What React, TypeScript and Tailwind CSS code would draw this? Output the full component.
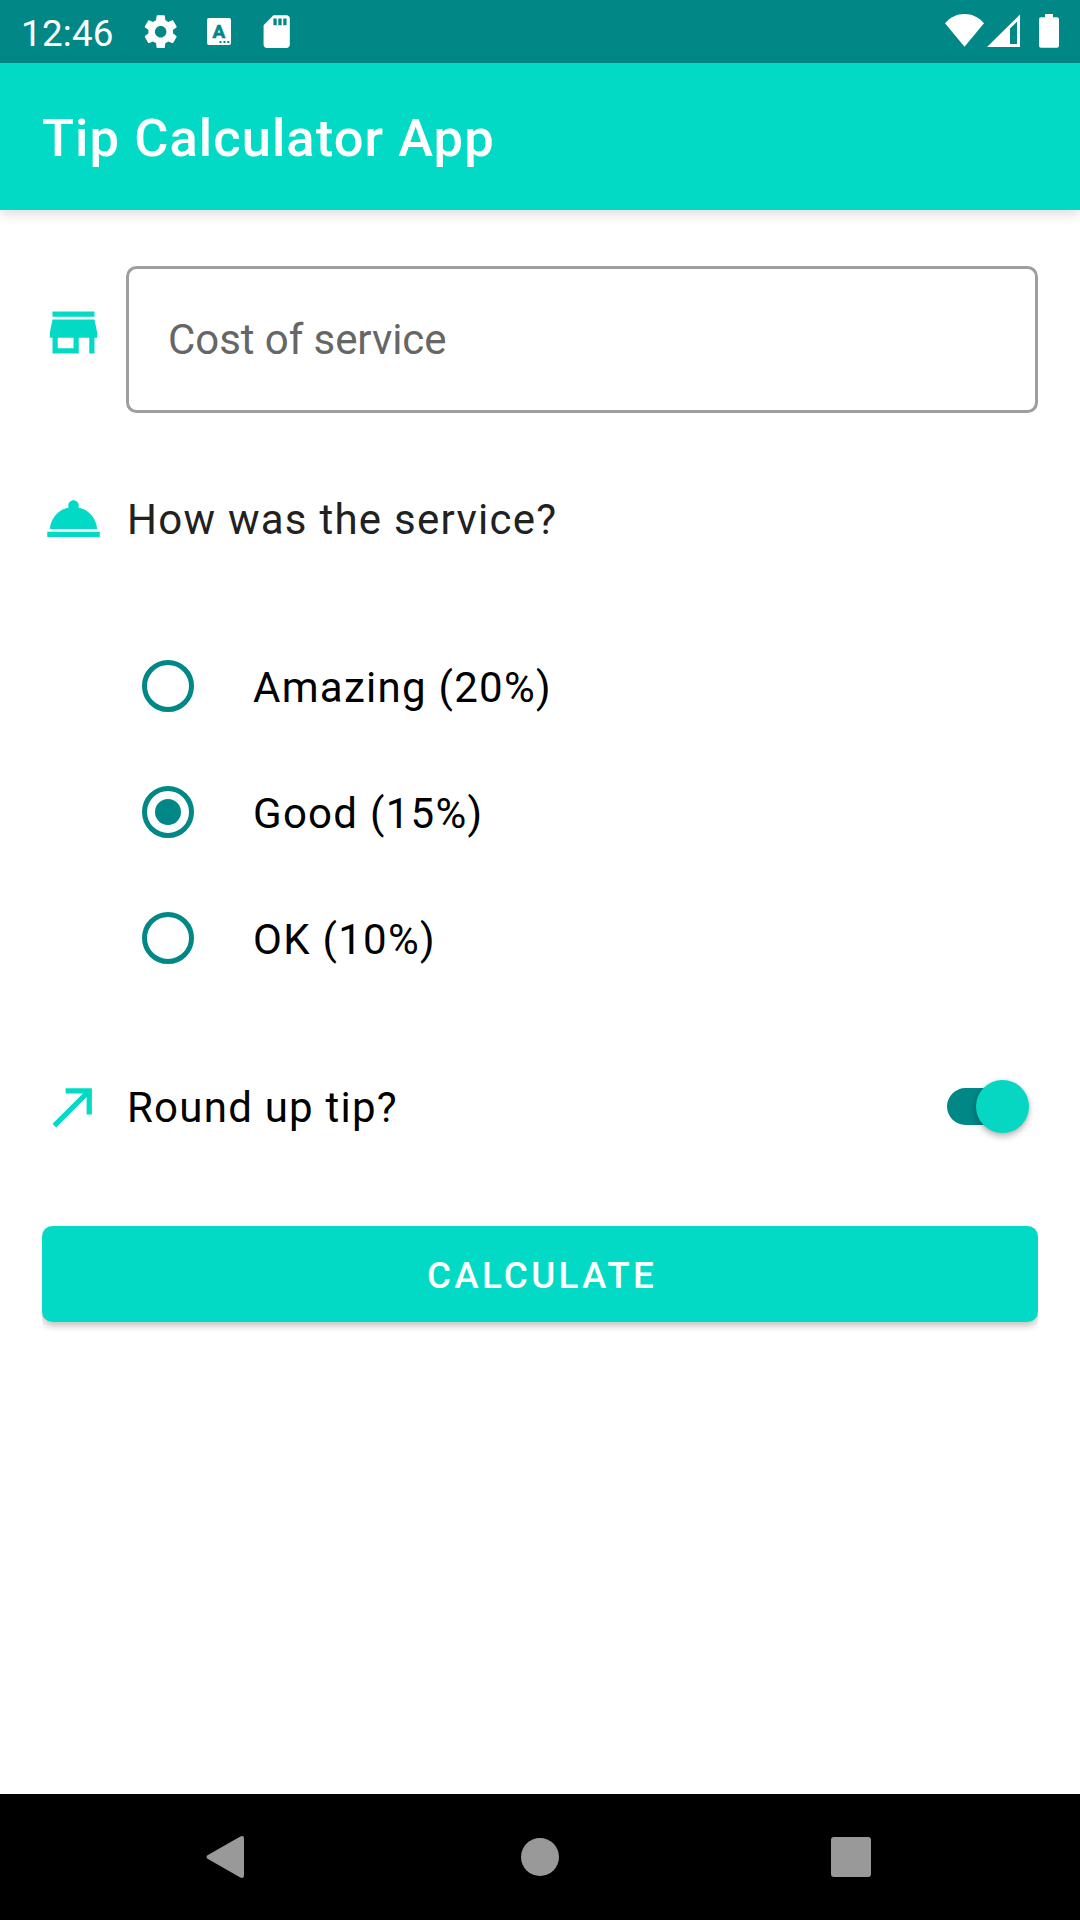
import { useState } from "react";

const OPTIONS = ["Amazing (20%)", "Good (15%)", "OK (10%)"];

function StatusBar() {
  return (
    <div className="flex h-[63px] items-start justify-between bg-[#018786] text-white">
      <div className="flex items-start pl-[21px]">
        <span className="w-[120px] pt-[12px] text-[36.75px] leading-[43px] tracking-[0.25px]">12:46</span>
        <svg className="mt-[12px] h-[39.4px] w-[39.4px]" viewBox="0 0 24 24" fill="currentColor">
          <path d="M19.43 12.98c.04-.32.07-.64.07-.98s-.03-.66-.07-.98l2.11-1.65c.19-.15.24-.42.12-.64l-2-3.46c-.12-.22-.39-.3-.61-.22l-2.49 1c-.52-.4-1.08-.73-1.69-.98l-.38-2.65C14.46 2.18 14.25 2 14 2h-4c-.25 0-.46.18-.49.42l-.38 2.65c-.61.25-1.17.59-1.69.98l-2.49-1c-.23-.09-.49 0-.61.22l-2 3.46c-.13.22-.07.49.12.64l2.11 1.65c-.04.32-.07.65-.07.98s.03.66.07.98l-2.11 1.65c-.19.15-.24.42-.12.64l2 3.46c.12.22.39.3.61.22l2.49-1c.52.4 1.08.73 1.69.98l.38 2.65c.03.24.24.42.49.42h4c.25 0 .46-.18.49-.42l.38-2.65c.61-.25 1.17-.59 1.69-.98l2.49 1c.23.09.49 0 .61-.22l2-3.46c.12-.22.07-.49-.12-.64l-2.11-1.65zM12 15.5c-1.93 0-3.5-1.57-3.5-3.5s1.57-3.5 3.5-3.5 3.5 1.57 3.5 3.5-1.57 3.5-3.5 3.5z" />
        </svg>
        <svg className="ml-[26.6px] mt-[18px] h-[27px] w-[24px]" viewBox="0 0 24 27">
          <rect width="24" height="27" rx="2" fill="currentColor" />
          <text x="12" y="20" textAnchor="middle" className="fill-[#018786] stroke-[#018786] text-[19px] font-bold" strokeWidth="0.6">A</text>
          <path d="M12.5 23h2v2h-2zM16.5 23h2v2h-2zM20.3 23h2v2h-2z" className="fill-[#018786]" />
        </svg>
        <svg className="ml-[26.3px] mt-[12px] h-[39.4px] w-[39.4px]" viewBox="0 0 24 24" fill="currentColor">
          <path d="M18 2h-8L4.02 8 4 20c0 1.1.9 2 2 2h12c1.1 0 2-.9 2-2V4c0-1.1-.9-2-2-2zm-6 6h-2V4h2V8zm3 0h-2V4h2V8zm3 0h-2V4h2V8z" />
        </svg>
      </div>
      <div className="flex items-start pr-[21px] pt-[14px]">
        <svg className="h-[34px] w-[39px]" viewBox="0 0 39 34" fill="currentColor">
          <path d="M19.500 32.700 0 9.300C5 3.300 12 0 19.500 0S34 3.300 39 9.300z" />
        </svg>
        <svg className="ml-[3px] h-[34px] w-[33px]" viewBox="0 0 33 34" fill="currentColor">
          <path fillRule="evenodd" d="M0 33 33 .5V33zM23 14.500V30h7V7.700z" />
        </svg>
        <svg className="ml-[19px] h-[34px] w-[20px]" viewBox="0 0 20 34" fill="currentColor">
          <path d="M6 0h8v3.300h4a2 2 0 0 1 2 2V31.800a2 2 0 0 1-2 2H2a2 2 0 0 1-2-2V5.300a2 2 0 0 1 2-2h4z" />
        </svg>
      </div>
    </div>
  );
}

function Radio({ checked }: { checked: boolean }) {
  return (
    <span className="flex h-[52.5px] w-[52.5px] items-center justify-center rounded-full border-[5.25px] border-[#018786]">
      {checked && <span className="h-[26px] w-[26px] rounded-full bg-[#018786]" />}
    </span>
  );
}

export default function App() {
  const [option, setOption] = useState(1);
  const [roundUp, setRoundUp] = useState(true);

  return (
    <div className="flex h-[1920px] w-[1080px] flex-col bg-white font-[Roboto,sans-serif] text-[42px] leading-[50px]">
      <StatusBar />
      <header className="flex h-[147px] items-center bg-[#03dac5] pl-[42px] text-[52.5px] font-medium text-white shadow-[0_4px_12px_rgba(0,0,0,0.14)]">
        <h1 className="pt-[3px] tracking-[1.05px]">Tip Calculator App</h1>
      </header>

      <main className="flex flex-1 flex-col px-[42px] pt-[56px]">
        <div className="flex">
          <svg className="mt-[34.5px] h-[63px] w-[63px] text-[#03dac5]" viewBox="0 0 24 24" fill="currentColor">
            <path d="M20 4H4v2h16V4zm1 10v-2l-1-5H4l-1 5v2h1v6h10v-6h4v6h2v-6h1zm-9 4H6v-4h6v4z" />
          </svg>
          <input
            placeholder="Cost of service"
            className="ml-[21px] h-[147px] w-[912px] rounded-[10.5px] border-3 border-[#9e9e9e] pl-[39px] tracking-[-0.07px] outline-none placeholder:text-[#666666]"
          />
        </div>

        <div className="mt-[74px] flex h-[63px] items-center">
          <svg className="h-[63px] w-[63px] text-[#03dac5]" viewBox="0 0 24 24" fill="currentColor">
            <path d="M2 17h20v2H2zm11.840-9.210c.1-.24.160-.510.160-.790 0-1.100-.900-2-2-2s-2 .900-2 2c0 .280.060.550.160.790C6.250 8.600 3.270 11.930 3 16h18c-.270-4.070-3.250-7.400-7.160-8.210z" />
          </svg>
          <span className="ml-[22px] pt-[2px] tracking-[1.26px] text-[#212121]">How was the service?</span>
        </div>

        <div className="mt-[73px] flex flex-col pl-[99.75px]" role="radiogroup">
          {OPTIONS.map((label, i) => (
            <button key={label} role="radio" aria-checked={option === i} onClick={() => setOption(i)} className="flex h-[126px] items-center text-black">
              <Radio checked={option === i} />
              <span className="ml-[58.750px] pt-[4px] tracking-[1.28px]">{label}</span>
            </button>
          ))}
        </div>

        <div className="mt-[74px] flex h-[63px] items-center">
          <svg className="h-[63px] w-[63px] text-[#03dac5]" viewBox="0 0 24 24" fill="currentColor">
            <path d="M9 5v2h6.590L4 18.590 5.410 20 17 8.410V15h2V5z" />
          </svg>
          <span className="ml-[22px] flex-1 pt-[3px] tracking-[1.24px] text-black">Round up tip?</span>
          <button role="switch" aria-checked={roundUp} onClick={() => setRoundUp(!roundUp)} className="mr-[9.5px] flex h-[37px] w-[82px] items-center justify-end rounded-full bg-gradient-to-r from-[#018786] from-85% to-transparent to-85%">
            <span className="h-[52.5px] w-[52.5px] shrink-0 rounded-full bg-[#06d7c3] shadow-[0_4px_6px_rgba(0,0,0,0.24),0_0_4px_rgba(0,0,0,0.12)]" />
          </button>
        </div>

        <button className="mt-[88px] h-[96px] rounded-[10.5px] bg-[#03dac5] pl-[4px] pt-[3px] text-[36.75px] font-medium tracking-[3.28px] text-white shadow-[0_4px_7px_rgba(0,0,0,0.24)] [clip-path:inset(-4px_0_-14px_0)]">
          CALCULATE
        </button>
      </main>

      <nav className="flex h-[126px] items-center bg-black text-[#999999]">
        <svg className="ml-[206px] h-[44px] w-[38px]" viewBox="0 0 38 44" fill="currentColor">
          <path d="M1.500 20.300 34.300 1.500Q38 0 38 3.500V40.500Q38 44 34.300 42.500L1.500 23.700Q-.5 22 1.500 20.300z" />
        </svg>
        <span className="ml-[277px] h-[38px] w-[38px] rounded-full bg-[#999999]" />
        <span className="ml-[272px] h-[40px] w-[40px] rounded-[3px] bg-[#999999]" />
      </nav>
    </div>
  );
}
